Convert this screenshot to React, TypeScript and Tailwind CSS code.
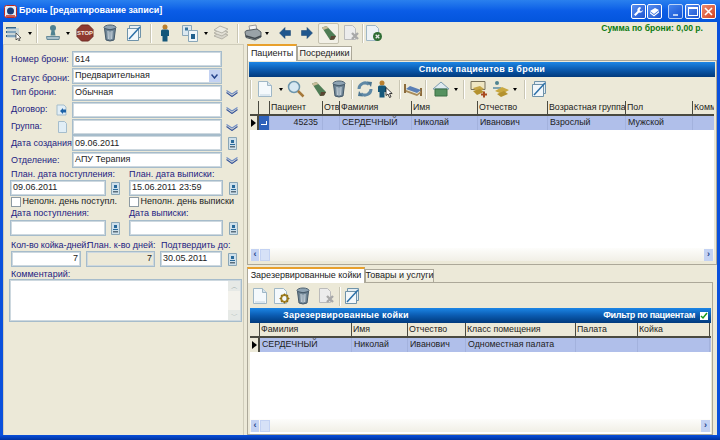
import type { ReactNode } from "react";

const FONT = "font-['Liberation_Sans',Arial,sans-serif]";

type IconProps = { className?: string };

function PageIcon({ className = "" }: IconProps) {
  return (
    <svg viewBox="0 0 16 18" className={`h-[18px] w-[16px] shrink-0 ${className}`}>
      <path d="M1.5 1.5h9l4 4v11h-13z" fill="#f4f9fc" stroke="#9fb7c6" />
      <path d="M10.5 1.5v4h4" fill="#d5e4ee" stroke="#9fb7c6" />
      <path d="M3 15h10" stroke="#c4d6e2" />
    </svg>
  );
}

function PageXIcon({ className = "" }: IconProps) {
  return (
    <svg viewBox="0 0 18 18" className={`h-[18px] w-[18px] shrink-0 ${className}`}>
      <path d="M2.5 1.5h8l3 3v11h-11z" fill="#ececec" stroke="#bbb" />
      <path d="M10 9l6 6m0-6l-6 6" stroke="#a8a8a8" strokeWidth="2.4" />
    </svg>
  );
}

function PageGreenXIcon({ className = "" }: IconProps) {
  return (
    <svg viewBox="0 0 18 18" className={`h-[18px] w-[18px] shrink-0 ${className}`}>
      <path d="M1.5 1.5h9l3 3v12h-12z" fill="#eef3f6" stroke="#9fb7c6" />
      <circle cx="12.5" cy="12.5" r="4.5" fill="#2f6d34" />
      <path d="M10.7 10.7l3.6 3.6m0-3.6l-3.6 3.6" stroke="#e8e8e8" strokeWidth="1.3" />
    </svg>
  );
}

function PageGearIcon({ className = "" }: IconProps) {
  return (
    <svg viewBox="0 0 18 18" className={`h-[18px] w-[18px] shrink-0 ${className}`}>
      <path d="M1.5 1.5h9l3 3v12h-12z" fill="#f4f9fc" stroke="#9fb7c6" />
      <circle cx="11.5" cy="11.5" r="3.4" fill="none" stroke="#a5821f" strokeWidth="2" />
      <path d="M11.5 6.5v2m0 6v2m-5-5h2m6 0h2m-8.5-3.5l1.4 1.4m4.2 4.2l1.4 1.4m0-7l-1.4 1.4m-4.2 4.2l-1.4 1.4" stroke="#8b6d1a" strokeWidth="1.2" />
    </svg>
  );
}

function StampIcon({ className = "" }: IconProps) {
  return (
    <svg viewBox="0 0 16 18" className={`h-[18px] w-[16px] shrink-0 ${className}`}>
      <circle cx="8" cy="4" r="3" fill="#4f8291" />
      <path d="M6.5 6.5h3l1 5h-5z" fill="#4f8291" />
      <path d="M1.5 12.5h13l-.5 3h-12z" fill="#a9c1cc" stroke="#668a99" />
    </svg>
  );
}

function StopIcon({ className = "" }: IconProps) {
  return (
    <svg viewBox="0 0 18 18" className={`h-[18px] w-[18px] shrink-0 ${className}`}>
      <path d="M5.5 1h7L17 5.5v7L12.5 17h-7L1 12.5v-7z" fill="#8f3a30" stroke="#6c2a24" />
      <text x="9" y="11" textAnchor="middle" fontSize="6" fontWeight="700" fill="#f0e4dc">STOP</text>
    </svg>
  );
}

function TrashIcon({ className = "" }: IconProps) {
  return (
    <svg viewBox="0 0 14 18" className={`h-[18px] w-[14px] shrink-0 ${className}`}>
      <ellipse cx="7" cy="3.5" rx="6" ry="2.5" fill="#8ea3b3" stroke="#4e6272" />
      <path d="M1.5 4.5l1.5 11.5q4 2 8 0l1.5-11.5q-5.5 2.5-11 0z" fill="#6f8595" stroke="#445868" />
      <path d="M5 7l.3 8M7 7.5v8M9 7l-.3 8" stroke="#dfe8ee" strokeWidth=".9" />
    </svg>
  );
}

function EditIcon({ className = "" }: IconProps) {
  return (
    <svg viewBox="0 0 16 18" className={`h-[18px] w-[16px] shrink-0 ${className}`}>
      <path d="M3.5 1.5h11v12h-11z" fill="#e4edf3" stroke="#6f93aa" />
      <path d="M1.5 4.5h11v12h-11z" fill="#f2f7fa" stroke="#6f93aa" />
      <path d="M3 15L14 3" stroke="#2b6fa8" strokeWidth="1.5" />
    </svg>
  );
}

function PersonIcon({ className = "" }: IconProps) {
  return (
    <svg viewBox="0 0 10 18" className={`h-[18px] w-[10px] shrink-0 ${className}`}>
      <circle cx="5" cy="3" r="2.5" fill="#b9802f" />
      <path d="M1 7q0-1.5 1.5-1.5h5Q9 5.5 9 7v5H7.5v5.5h-5V12H1z" fill="#14577a" />
    </svg>
  );
}

function PersonCursorIcon({ className = "" }: IconProps) {
  return (
    <svg viewBox="0 0 18 18" className={`h-[18px] w-[18px] shrink-0 ${className}`}>
      <circle cx="5" cy="3" r="2.5" fill="#b9802f" />
      <path d="M1 7q0-1.5 1.5-1.5h5Q9 5.5 9 7v5H7.5v5.5h-5V12H1z" fill="#14577a" />
      <path d="M9 7.5v8l2-1.5 1.5 3.5 1.5-.7-1.5-3.3h2.7z" fill="#fff" stroke="#111" strokeWidth=".8" />
    </svg>
  );
}

function DocsAIcon({ className = "" }: IconProps) {
  return (
    <svg viewBox="0 0 16 18" className={`h-[18px] w-[16px] shrink-0 ${className}`}>
      <path d="M.5 1.5h9v10h-9z" fill="#dbe8f0" stroke="#89a6b8" />
      <path d="M6.5 6.5h9v11h-9z" fill="#eef5f9" stroke="#89a6b8" />
      <path d="M3 3.5h3v3H3z" fill="#35749c" />
      <path d="M9 10h4v5H9z" fill="#1f5f8c" />
    </svg>
  );
}

function StackIcon({ className = "" }: IconProps) {
  return (
    <svg viewBox="0 0 16 18" className={`h-[18px] w-[16px] shrink-0 ${className}`}>
      <path d="M1 12l6-4 8 3-6 4z" fill="#d8d6cc" stroke="#b5b3a8" />
      <path d="M1 9l6-4 8 3-6 4z" fill="#e2e0d6" stroke="#b5b3a8" />
      <path d="M1 6l6-4 8 3-6 4z" fill="#ecebe2" stroke="#b5b3a8" />
    </svg>
  );
}

function PrinterIcon({ className = "" }: IconProps) {
  return (
    <svg viewBox="0 0 18 18" className={`h-[18px] w-[18px] shrink-0 ${className}`}>
      <path d="M5 2l7-1 1 6H6z" fill="#f5f5f5" stroke="#999" />
      <path d="M1 8q0-1 2-1.5l10-1.5 4 3v5l-6 3-9-2.5z" fill="#9aa3a8" stroke="#555e63" />
      <path d="M2 12l9 2.5 6-2.5" fill="none" stroke="#41494e" strokeWidth="1.5" />
    </svg>
  );
}

function ArrowIcon({ left = false }: { left?: boolean }) {
  return (
    <svg viewBox="0 0 12 12" className="h-[12px] w-[12px] shrink-0">
      <path d={left ? "M6 .5L.5 6 6 11.5V8.5h5.5v-5H6z" : "M6 .5L11.5 6 6 11.5V8.5H.5v-5H6z"} fill="#20578e" stroke="#14406f" strokeWidth=".5" />
    </svg>
  );
}

function PencilIcon({ className = "" }: IconProps) {
  return (
    <svg viewBox="0 0 16 16" className={`h-[16px] w-[16px] shrink-0 ${className}`}>
      <path d="M1 2.5L5.5 1 15 11l-2 3.5-4 .5z" fill="#4f7d55" />
      <path d="M1 2.5L5.5 1l2 2-5 2z" fill="#c9bd9a" />
      <path d="M10 11h5l-2 3.5-4 .5z" fill="#5a4633" />
    </svg>
  );
}

function SearchIcon({ className = "" }: IconProps) {
  return (
    <svg viewBox="0 0 18 18" className={`h-[18px] w-[18px] shrink-0 ${className}`}>
      <circle cx="7" cy="7" r="5.5" fill="#d7e8f2" stroke="#6d96ad" strokeWidth="1.5" />
      <path d="M11 11l5.5 5.5" stroke="#a5783a" strokeWidth="2.5" />
    </svg>
  );
}

function RefreshIcon() {
  return (
    <svg viewBox="0 0 18 18" className="h-[18px] w-[18px] shrink-0">
      <path d="M3 9a6 6 0 0 1 10-4.5" fill="none" stroke="#5f88a5" strokeWidth="3" />
      <path d="M15 9a6 6 0 0 1-10 4.5" fill="none" stroke="#5f88a5" strokeWidth="3" />
      <path d="M11 1.5l5 .5-1 5zM7 16.5l-5-.5 1-5z" fill="#4a7592" />
    </svg>
  );
}

function BedIcon() {
  return (
    <svg viewBox="0 0 18 16" className="h-[16px] w-[18px] shrink-0">
      <path d="M1 3v9M17 7v8" stroke="#8a6a3c" strokeWidth="2" />
      <path d="M2 8l4-3 11 4-4 3z" fill="#5a7fb5" />
      <path d="M2 9l11 4 4-3v2l-4 3-11-4z" fill="#a88c5a" />
    </svg>
  );
}

function HouseIcon() {
  return (
    <svg viewBox="0 0 18 16" className="h-[16px] w-[18px] shrink-0">
      <path d="M1 8l8-7 8 7z" fill="#dfeaf0" stroke="#7d9cae" />
      <path d="M3 8h12v7H3z" fill="#55915f" stroke="#3b6f45" />
    </svg>
  );
}

function MoneyAddIcon() {
  return (
    <svg viewBox="0 0 18 18" className="h-[18px] w-[18px] shrink-0">
      <path d="M1 1.5h14v8H1z" fill="#efe6c3" stroke="#77705a" />
      <path d="M3 8l7-2 4 3-7 3z" fill="#c4a446" />
      <path d="M3 11l7-2 4 3-7 3z" fill="#b4922f" />
      <path d="M11 14.5h6M14 11.5v6" stroke="#a84a20" strokeWidth="2" />
    </svg>
  );
}

function StampMoneyIcon() {
  return (
    <svg viewBox="0 0 18 18" className="h-[18px] w-[18px] shrink-0">
      <circle cx="5" cy="3" r="2" fill="#4f8291" />
      <path d="M1 7h8v2H1z" fill="#7fa3b0" />
      <path d="M3 11l7-4 7 3-7 4z" fill="#c9a840" />
      <path d="M5 14l7-3 4 3-7 3z" fill="#b4922f" />
    </svg>
  );
}

function Caret({ className = "" }: IconProps) {
  return <span className={`h-0 w-0 shrink-0 border-x-[2.5px] border-t-[3px] border-x-transparent border-t-black ${className}`} />;
}

function Sep({ className = "" }: IconProps) {
  return <span className={`h-[19px] w-[2px] shrink-0 border-x border-l-[#c9c6b4] border-r-white ${className}`} />;
}

function Calendar({ className = "" }: IconProps) {
  return (
    <svg viewBox="0 0 9 13" className={`h-[13px] w-[9px] shrink-0 ${className}`}>
      <path d="M.5.5h8v12h-8z" fill="#cfe0ea" stroke="#8aa6b6" />
      <path d="M3 3h3v3H3zM2 7h5v1H2z" fill="#2a6a9a" />
      <path d="M2 9h5v1.5H2z" fill="#5a6f7d" />
    </svg>
  );
}

function Chevrons() {
  return (
    <svg viewBox="0 0 12 8" className="ml-[4px] h-[8px] w-[12px] shrink-0">
      <path d="M.5 1.5L6 5l5.5-3.5" fill="none" stroke="#6f8cc4" strokeWidth="1.1" />
      <path d="M.5 3.5L6 7.5l5.5-4" fill="none" stroke="#34529a" strokeWidth="1.1" />
    </svg>
  );
}

function Label({ children, className = "" }: { children: ReactNode; className?: string }) {
  return <span className={`whitespace-nowrap text-[9px] leading-none text-[#1c1c82] ${className}`}>{children}</span>;
}

function Input({ value = "", className = "", right = false, disabled = false }: { value?: string; className?: string; right?: boolean; disabled?: boolean }) {
  return (
    <div
      className={`flex h-[16px] shrink-0 items-center overflow-hidden border border-[#a6bccb] px-[2px] text-[9px] text-[#222] shadow-[0_0_0_1px_#cdd8df_inset] ${disabled ? "bg-[#ece9d8]" : "bg-white"} ${right ? "justify-end" : ""} ${className}`}
    >
      {value}
    </div>
  );
}

function FormRow({ label, value, icon, trailing }: { label: string; value?: string; icon?: ReactNode; trailing?: ReactNode }) {
  return (
    <div className="flex h-[16.8px] items-center">
      <div className="flex w-[61px] shrink-0 items-center justify-between pr-[5px]">
        <Label>{label}</Label>
        {icon}
      </div>
      <Input value={value} className="w-[150px]" />
      {trailing}
    </div>
  );
}

function DatePair({ a, b, value1, value2, labelHeight }: { a: string; b: string; value1?: string; value2?: string; labelHeight: string }) {
  return (
    <>
      <div className={`flex items-center ${labelHeight}`}>
        <Label className="w-[118px]">{a}</Label>
        <Label>{b}</Label>
      </div>
      <div className="-ml-[1px] flex items-center">
        <Input value={value1} className="w-[96px]" />
        <Calendar className="ml-[5px]" />
        <Input value={value2} className="ml-[9px] w-[94px]" />
        <Calendar className="ml-[6px]" />
      </div>
    </>
  );
}

function ScrollH() {
  return (
    <div className="flex h-[13px] items-center justify-between bg-gradient-to-b from-[#fdfdfb] to-[#f1efe6] px-[1px]">
      <div className="flex gap-[1px]">
        <div className="flex h-[12px] w-[8px] items-center justify-center bg-[#c3d2f3] text-[9px] font-bold leading-none text-[#24428a]">‹</div>
        <div className="h-[12px] w-[10px] border border-[#c3d2f3] bg-[#d6e1f7]" />
      </div>
      <div className="flex h-[12px] w-[9px] items-center justify-center bg-[#c3d2f3] text-[9px] font-bold leading-none text-[#24428a]">›</div>
    </div>
  );
}

type Col = { title: string; value: ReactNode; width: string; right?: boolean };

function Grid({ cols, markerWidth }: { cols: Col[]; markerWidth: string }) {
  return (
    <div className="text-[8.8px] text-[#222]">
      <div className="flex h-[15px] border-b-2 border-[#4a4a40] bg-[#ece9d8]">
        <div className={`shrink-0 border-r border-[#4a4a40] ${markerWidth}`} />
        {cols.map((c) => (
          <div key={c.title} className={`flex shrink-0 items-center overflow-hidden whitespace-nowrap border-r border-[#4a4a40] pl-[1px] ${c.width}`}>
            {c.title}
          </div>
        ))}
      </div>
      <div className="flex h-[14px] bg-[#b0bfea]">
        <div className={`flex shrink-0 items-center justify-center border-r-2 border-[#4a4a40] bg-[#ece9d8] ${markerWidth}`}>
          <span className="h-0 w-0 border-y-[4.5px] border-l-[5px] border-y-transparent border-l-black" />
        </div>
        {cols.map((c) => (
          <div key={c.title} className={`flex shrink-0 items-center overflow-hidden whitespace-nowrap border-r border-[#a3b2dd] pl-[2px] ${c.right ? "justify-end pr-[4px]" : ""} ${c.width}`}>
            {c.value}
          </div>
        ))}
      </div>
    </div>
  );
}

function BlueBar({ children }: { children: ReactNode }) {
  return (
    <div className="flex h-[15px] shrink-0 items-center bg-gradient-to-b from-[#1c86e6] via-[#0b5bb0] to-[#023a7c] text-[9px] font-bold tracking-[0.25px] text-white">
      {children}
    </div>
  );
}

const patientCols: Col[] = [
  {
    title: "",
    width: "w-[11px]",
    value: <span className="-ml-[2px] flex h-[14px] w-[11px] items-center justify-center bg-[#2e62bb]"><span className="h-[4px] w-[6px] border-b border-r border-white" /></span>,
  },
  { title: "Пациент", value: "45235", width: "w-[53px]", right: true },
  { title: "Отв", value: "", width: "w-[17px]" },
  { title: "Фамилия", value: "СЕРДЕЧНЫЙ", width: "w-[72px]" },
  { title: "Имя", value: "Николай", width: "w-[66px]" },
  { title: "Отчество", value: "Иванович", width: "w-[70px]" },
  { title: "Возрастная группа", value: "Взрослый", width: "w-[78px]" },
  { title: "Пол", value: "Мужской", width: "w-[67px]" },
  { title: "Комм", value: "", width: "w-[24px]" },
];

const bedCols: Col[] = [
  { title: "Фамилия", value: "СЕРДЕЧНЫЙ", width: "w-[92px]" },
  { title: "Имя", value: "Николай", width: "w-[56px]" },
  { title: "Отчество", value: "Иванович", width: "w-[58px]" },
  { title: "Класс помещения", value: "Одноместная палата", width: "w-[110px]" },
  { title: "Палата", value: "", width: "w-[62px]" },
  { title: "Койка", value: "", width: "w-[72px]" },
];

function TabActive({ children, className = "" }: { children: ReactNode; className?: string }) {
  return (
    <div className={`z-10 -mb-[1px] flex items-center whitespace-nowrap border-x border-[#aca899] border-t-2 border-t-[#e8a02c] bg-white text-[9px] text-[#222] ${className}`}>
      {children}
    </div>
  );
}

function TabIdle({ children, className = "" }: { children: ReactNode; className?: string }) {
  return (
    <div className={`mt-[2px] flex items-center whitespace-nowrap border border-b-0 border-[#aca899] bg-gradient-to-b from-white to-[#ece9d8] text-[9px] text-[#222] ${className}`}>
      {children}
    </div>
  );
}

function TitleBtn({ children, color = "blue", className = "" }: { children: ReactNode; color?: "blue" | "red"; className?: string }) {
  return (
    <div
      className={`flex h-[15px] w-[15px] items-center justify-center rounded-[2px] border border-white ${
        color === "red" ? "bg-gradient-to-br from-[#ec8a70] to-[#d0401c]" : "bg-gradient-to-br from-[#5a90f0] to-[#1c52cf]"
      } ${className}`}
    >
      {children}
    </div>
  );
}

export default function App() {
  return (
    <div className={`flex h-[440px] w-[720px] flex-col overflow-hidden bg-[#0a50dc] ${FONT}`}>
      {/* title bar */}
      <div className="flex h-[22px] shrink-0 items-center bg-gradient-to-b from-[#2a80ee] via-[#0a5ce6] to-[#0455dc] pl-[4px] pr-[4px]">
        <svg viewBox="0 0 13 13" className="h-[13px] w-[13px] shrink-0">
          <rect x=".5" y=".5" width="12" height="12" rx="2" fill="#e8eef5" stroke="#c02a20" />
          <circle cx="6.5" cy="6" r="3.5" fill="#1c3f7a" />
          <path d="M2 11h9" stroke="#c02a20" strokeWidth="1.5" />
        </svg>
        <span className="ml-[2px] whitespace-nowrap text-[9px] font-bold text-white">Бронь [редактирование записи]</span>
        <div className="ml-auto flex items-center">
          <TitleBtn>
            <svg viewBox="0 0 11 11" className="h-[11px] w-[11px]"><path d="M7 1a3 3 0 0 0-2.5 4L1 8.5 2.5 10 6 6.5A3 3 0 0 0 10 4L8 5.5 6.5 4 8 2z" fill="#fff" /></svg>
          </TitleBtn>
          <TitleBtn className="ml-[1px]">
            <svg viewBox="0 0 11 11" className="h-[11px] w-[11px]"><path d="M1 5l5-3 4 2-5 4zM1 6l4 3 5-4v1.5L5 10.5 1 7.5z" fill="#fff" /></svg>
          </TitleBtn>
          <TitleBtn className="ml-[6px] opacity-70">
            <span className="mt-[7px] h-[2px] w-[5px] bg-white" />
          </TitleBtn>
          <TitleBtn className="ml-[2px]">
            <span className="h-[9px] w-[10px] border border-t-2 border-white" />
          </TitleBtn>
          <TitleBtn color="red" className="ml-[1px]">
            <svg viewBox="0 0 9 9" className="h-[9px] w-[9px]"><path d="M1 1l7 7m0-7L1 8" stroke="#fff" strokeWidth="1.6" /></svg>
          </TitleBtn>
        </div>
      </div>

      <div className="mx-[3px] flex min-h-0 flex-1 flex-col bg-[#ece9d8]">
        {/* main toolbar */}
        <div className="flex h-[22px] shrink-0 items-center">
          <svg viewBox="0 0 16 16" className="ml-[3px] h-[16px] w-[16px] shrink-0">
            <path d="M0 2h10v2H0zM0 6h10v2H0zM0 10h10v2H0z" fill="#35688f" />
            <path d="M1 3h12v10H1z" fill="#b3c9d8" opacity=".6" />
            <path d="M10 8v7l1.5-1.5L13 16l1-.5-1.3-2.5H15z" fill="#fff" stroke="#111" strokeWidth=".6" />
          </svg>
          <Caret className="ml-[6px]" />
          <Sep className="ml-[4px]" />
          <StampIcon className="ml-[7px]" />
          <Caret className="ml-[5px]" />
          <StopIcon className="ml-[6px]" />
          <TrashIcon className="ml-[9px]" />
          <EditIcon className="ml-[9px]" />
          <Sep className="ml-[8px]" />
          <PersonIcon className="ml-[8px]" />
          <DocsAIcon className="ml-[12px]" />
          <Caret className="ml-[6px]" />
          <StackIcon className="ml-[5px]" />
          <Sep className="ml-[8px]" />
          <PrinterIcon className="ml-[5px]" />
          <Caret className="ml-[3px]" />
          <span className="ml-[10px]"><ArrowIcon left /></span>
          <span className="ml-[10px]"><ArrowIcon /></span>
          <div className="ml-[5px] flex h-[21px] w-[21px] shrink-0 items-center justify-center rounded-[2px] border border-[#c5c2b0] bg-[#f2f0e6]">
            <PencilIcon />
          </div>
          <PageXIcon className="ml-[3px]" />
          <Sep className="ml-[2px]" />
          <PageGreenXIcon className="ml-[1px]" />
          <span className="ml-auto mr-[14px] -mt-[9px] whitespace-nowrap text-[8.6px] font-bold text-[#0b7a12]">Сумма по брони: 0,00 р.</span>
        </div>

        <div className="flex min-h-0 flex-1">
          {/* left form */}
          <div className="flex w-[241px] shrink-0 flex-col border border-b-0 border-[#d0cdbb] pl-[7px] pt-[6px]">
            <FormRow label="Номер брони:" value="614" />
            <div className="flex h-[16.8px] items-center">
              <div className="w-[61px] shrink-0"><Label>Статус брони:</Label></div>
              <div className="relative w-[150px]">
                <Input value="Предварительная" className="w-[150px]" />
                <span className="absolute right-[2px] top-[2px] flex h-[12px] w-[11px] items-center justify-center bg-[#c3d2f3]">
                  <svg viewBox="0 0 7 5" className="h-[5px] w-[7px]"><path d="M.5.5L3.5 4l3-3.5" fill="none" stroke="#24428a" strokeWidth="1.5" /></svg>
                </span>
              </div>
            </div>
            <FormRow label="Тип брони:" value="Обычная" trailing={<Chevrons />} />
            <FormRow
              label="Договор:"
              icon={<svg viewBox="0 0 11 12" className="h-[12px] w-[11px]"><path d="M1 1h7l2 2v8H1z" fill="#e1eef6" stroke="#a5bdcc" /><path d="M4 7l3-3v1.5h3v3H7V10z" fill="#1d63a8" /></svg>}
              trailing={<Chevrons />}
            />
            <FormRow
              label="Группа:"
              icon={<svg viewBox="0 0 9 12" className="h-[12px] w-[9px]"><path d="M.5.5h6l2 2v9h-8z" fill="#e1eef6" stroke="#a5bdcc" /></svg>}
              trailing={<Chevrons />}
            />
            <FormRow label="Дата создания:" value="09.06.2011" trailing={<Calendar className="ml-[6px]" />} />
            <FormRow label="Отделение:" value="АПУ Терапия" trailing={<Chevrons />} />

            <div className="mt-[1px]">
              <DatePair labelHeight="h-[10.5px]" a="План. дата поступления:" b="План. дата выписки:" value1="09.06.2011" value2="15.06.2011 23:59" />
            </div>
            <div className="mt-[0.5px] flex h-[11px] items-center">
              <span className="h-[10px] w-[10px] shrink-0 border border-[#8d9aa3] bg-white" />
              <span className="ml-[1.5px] w-[106.5px] shrink-0 whitespace-nowrap text-[9px] text-[#222]">Неполн. день поступл.</span>
              <span className="h-[10px] w-[10px] shrink-0 border border-[#8d9aa3] bg-white" />
              <span className="ml-[1.5px] whitespace-nowrap text-[9px] text-[#222]">Неполн. день выписки</span>
            </div>
            <DatePair labelHeight="h-[12.5px]" a="Дата поступления:" b="Дата выписки:" />

            <div className="mt-[6px] flex h-[6px] items-center">
              <Label className="w-[76px] tracking-[-0.1px]">Кол-во койка-дней:</Label>
              <Label className="w-[74px]">План. к-во дней:</Label>
              <Label>Подтвердить до:</Label>
            </div>
            <div className="mt-[3px] flex items-center">
              <Input value="7" right className="w-[70px]" />
              <Input value="7" right disabled className="ml-[5px] w-[69px]" />
              <Input value="30.05.2011" className="ml-[5px] w-[62px]" />
              <Calendar className="ml-[6px]" />
            </div>
            <Label className="mt-[3px] block h-[9px]">Комментарий:</Label>
            <div className="-ml-[2px] flex h-[43px] w-[233px] justify-end border border-[#a6bccb] bg-white shadow-[0_0_0_1px_#cdd8df_inset]">
              <div className="m-[1px] flex w-[12px] flex-col justify-between bg-[#f3f2ec]">
                <span className="flex h-[10px] items-center justify-center bg-[#e6e9e6] text-[7px] leading-none text-[#9aa]">︿</span>
                <span className="flex h-[10px] items-center justify-center bg-[#e6e9e6] text-[7px] leading-none text-[#9aa]">﹀</span>
              </div>
            </div>
          </div>

          <div className="w-[3px] shrink-0" />

          {/* right side */}
          <div className="flex w-[470px] shrink-0 flex-col">
            <div className="flex h-[16px] shrink-0 items-stretch">
              <TabActive className="w-[50px] justify-center">Пациенты</TabActive>
              <TabIdle className="w-[55px] justify-center">Посредники</TabIdle>
            </div>
            <div className="flex h-[205px] shrink-0 flex-col border border-[#aca899] bg-[#ece9d8] px-[1px] pt-[1px]">
              <BlueBar><span className="w-full text-center">Список пациентов в брони</span></BlueBar>
              <div className="flex h-[24px] shrink-0 items-center">
                <Sep className="ml-[1px]" />
                <PageIcon className="ml-[5px]" />
                <Caret className="ml-[6px]" />
                <SearchIcon className="ml-[4px]" />
                <span className="ml-[6px]"><PencilIcon /></span>
                <TrashIcon className="ml-[5px]" />
                <Sep className="ml-[5px]" />
                <span className="ml-[3px]"><RefreshIcon /></span>
                <PersonCursorIcon className="ml-[3px]" />
                <Sep className="ml-[4px]" />
                <span className="ml-[3px]"><BedIcon /></span>
                <Sep className="ml-[3px]" />
                <span className="ml-[5px]"><HouseIcon /></span>
                <Caret className="ml-[4px]" />
                <Sep className="ml-[5px]" />
                <span className="ml-[5px]"><MoneyAddIcon /></span>
                <span className="ml-[4px]"><StampMoneyIcon /></span>
                <Caret className="ml-[3px]" />
                <Sep className="ml-[7px]" />
                <EditIcon className="ml-[5px]" />
              </div>
              <div className="ml-[1px] mr-[1px] flex min-h-0 flex-1 flex-col overflow-hidden bg-white">
                <Grid cols={patientCols} markerWidth="w-[9px]" />
                <div className="flex-1" />
                <ScrollH />
              </div>
              <div className="h-[3px] shrink-0" />
            </div>

            <div className="mt-[2px] flex h-[15px] shrink-0 items-stretch">
              <TabActive className="w-[118px] justify-center">Зарезервированные койки</TabActive>
              <TabIdle className="w-[69px] justify-center">Товары и услуги</TabIdle>
            </div>
            <div className="mr-[4px] flex min-h-0 flex-1 flex-col border border-[#aca899] bg-[#ece9d8] pl-[2px] pr-[1px] pt-[1px]">
              <div className="flex h-[24px] shrink-0 items-center">
                <PageIcon className="ml-[2px]" />
                <PageGearIcon className="ml-[5px]" />
                <TrashIcon className="ml-[5px]" />
                <PageXIcon className="ml-[7px]" />
                <Sep className="ml-[4px]" />
                <EditIcon className="ml-[3px]" />
              </div>
              <BlueBar>
                <span className="ml-[33px]">Зарезервированные койки</span>
                <span className="ml-auto whitespace-nowrap tracking-[-0.3px]">Фильтр по пациентам</span>
                <span className="ml-[5px] mr-[3px] flex h-[8px] w-[8px] items-center justify-center bg-white">
                  <svg viewBox="0 0 8 8" className="h-[8px] w-[8px]"><path d="M1 4l2 2 4-5" fill="none" stroke="#1a9a1a" strokeWidth="1.5" /></svg>
                </span>
              </BlueBar>
              <div className="flex min-h-0 flex-1 flex-col bg-white pb-[2px]">
                <Grid cols={bedCols} markerWidth="w-[10px]" />
                <div className="flex-1" />
                <ScrollH />
              </div>
            </div>
          </div>
        </div>
      </div>
      <div className="h-[5px] shrink-0 bg-gradient-to-b from-[#0a50dc] to-[#0032a0]" />
    </div>
  );
}
